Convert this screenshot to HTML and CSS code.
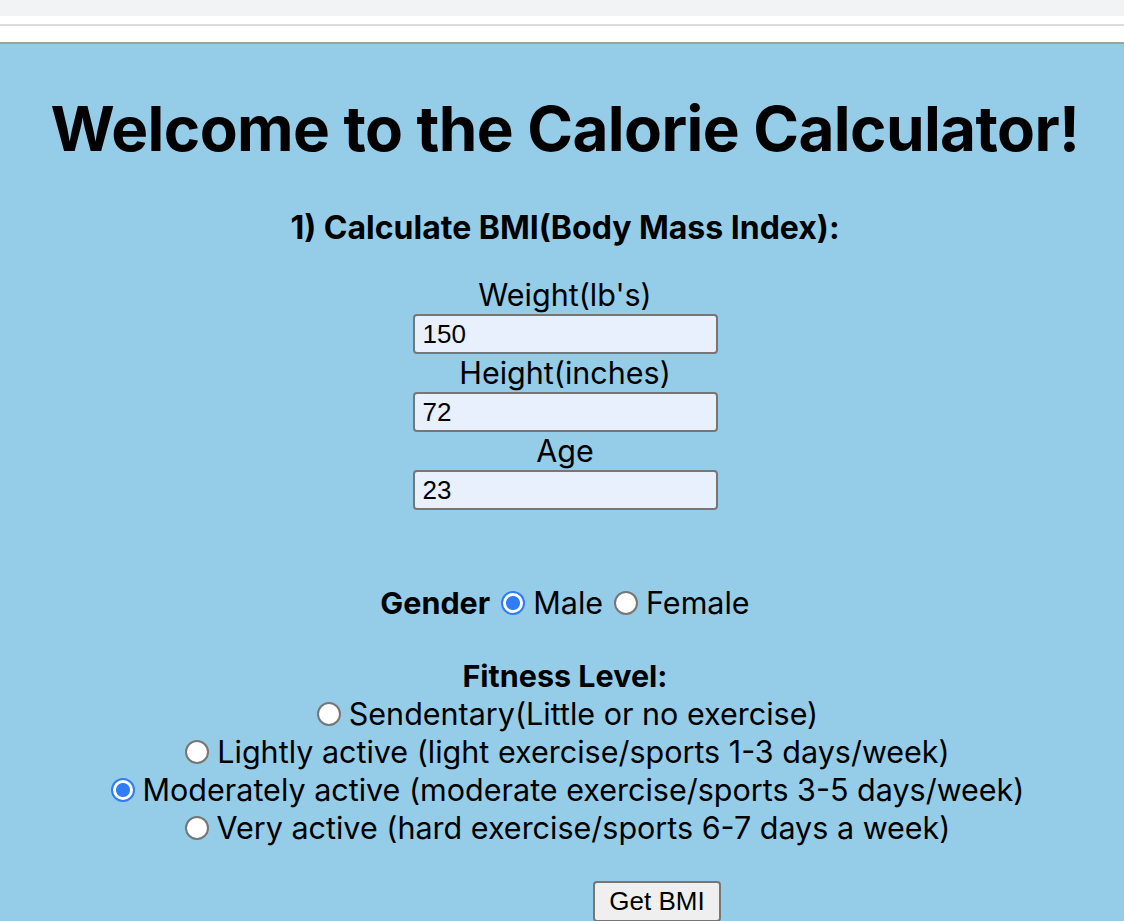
FILE: index.html
```html
<!DOCTYPE html>
<html>
<head>
<meta charset="utf-8">
<link rel="stylesheet" href="styles.css">
</head>
<body>
<div class="chrome">
  <div class="tabbar"></div>
  <div class="toolbar"></div>
</div>
<main class="page">
  <h1 class="title">Welcome to the Calorie Calculator!</h1>
  <h3 class="subtitle">1) Calculate BMI(Body Mass Index):</h3>
  <form class="bmi">
    <label class="field"><span class="field-label">Weight(lb's)</span><input class="field-input" type="text" value="150"></label>
    <label class="field"><span class="field-label">Height(inches)</span><input class="field-input" type="text" value="72"></label>
    <label class="field"><span class="field-label">Age</span><input class="field-input" type="text" value="23"></label>
    <div class="gender">
      <b class="group-title">Gender</b>
      <label class="opt"><input class="radio" type="radio" name="g" checked>Male</label>
      <label class="opt"><input class="radio" type="radio" name="g">Female</label>
    </div>
    <div class="fitness">
      <b class="group-title">Fitness Level:</b>
      <label class="opt"><input class="radio" type="radio" name="f">Sendentary(Little or no exercise)</label>
      <label class="opt"><input class="radio" type="radio" name="f">Lightly active (light exercise/sports 1-3 days/week)</label>
      <label class="opt"><input class="radio" type="radio" name="f" checked>Moderately active (moderate exercise/sports 3-5 days/week)</label>
      <label class="opt"><input class="radio" type="radio" name="f">Very active (hard exercise/sports 6-7 days a week)</label>
    </div>
    <div class="actions"><button class="btn" type="button">Get BMI</button></div>
  </form>
</main>
</body>
</html>
```
FILE: styles.css
```css
html, body {
  margin: 0;
  padding: 0;
  height: 100%;
}
body {
  font-family: Inter, "Noto Sans", sans-serif;
  color: #000;
  background: #95cde9;
  overflow: hidden;
}
.chrome {
  background: #fff;
}
.tabbar {
  height: 16px;
  background: #f2f3f5;
}
.toolbar {
  margin-top: 8px;
  margin-bottom: 2px;
  height: 16px;
  border-top: 2px solid #dcdbe0;
  border-bottom: 2px solid #a0a0a0;
}
.page {
  background: #95cde9;
  text-align: center;
  padding-top: 1px;
  padding-left: 6px;
}
.title {
  font-size: 62px;
  font-weight: 700;
  letter-spacing: -0.6px;
  line-height: 76px;
  margin: 44px 0 0;
}
.subtitle {
  font-size: 32px;
  font-weight: 700;
  line-height: 38px;
  margin: 42px 0 0;
}
.bmi {
  display: flex;
  flex-direction: column;
  align-items: center;
  font-size: 30.5px;
  line-height: 38px;
  margin-top: 29px;
}
.field {
  display: flex;
  flex-direction: column;
  align-items: center;
}
.field-input {
  box-sizing: border-box;
  width: 305px;
  height: 40px;
  margin: 0;
  padding: 0 8px;
  font-family: "Liberation Sans", Arial, sans-serif;
  font-size: 26px;
  color: #000;
  background: #e8f0fe;
  border: 2px solid #767676;
  border-radius: 4px;
}
.gender {
  margin-top: 74px;
  display: flex;
  align-items: center;
  gap: 6px;
}
.fitness {
  margin-top: 35px;
  display: flex;
  flex-direction: column;
  align-items: center;
}
.group-title {
  font-weight: 700;
}
.opt {
  display: flex;
  align-items: center;
}
.radio {
  appearance: none;
  -webkit-appearance: none;
  box-sizing: border-box;
  width: 24px;
  height: 24px;
  margin: 0 8px 0 5px;
  border-radius: 50%;
  border: 2px solid #767676;
  background: #fff;
}
.radio:checked {
  border: 2px solid #2f7cf6;
  background: radial-gradient(circle, #2f7cf6 0 6.5px, #fff 7.5px);
}
.actions {
  margin-top: 33px;
  padding-left: 184px;
}
.btn {
  box-sizing: border-box;
  width: 128px;
  height: 41px;
  font-family: "Liberation Sans", Arial, sans-serif;
  font-size: 26px;
  background: #efefef;
  border: 2px solid #767676;
  border-radius: 4px;
  padding: 0;
  color: #000;
}
```
